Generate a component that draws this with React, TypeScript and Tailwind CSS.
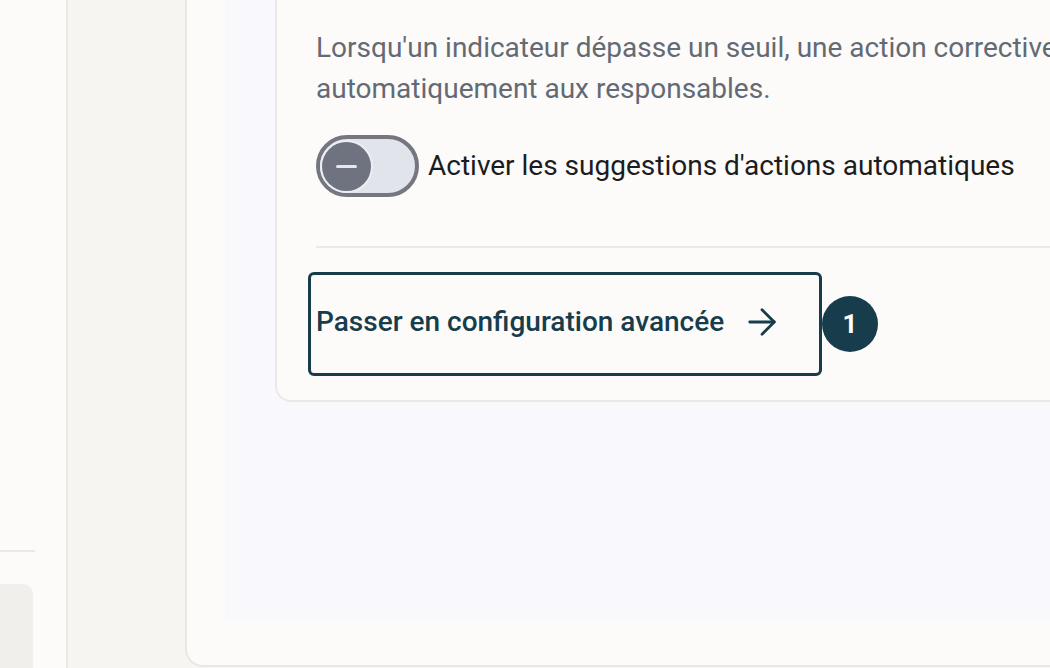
import { ArrowRight } from "lucide-react";

function Toggle() {
  return (
    <button
      type="button"
      role="switch"
      aria-checked="false"
      className="flex h-[62px] w-[103px] shrink-0 items-center rounded-full border-[4px] border-[#74777f] bg-[#e2e4ec] px-[2px]"
    >
      <span className="flex h-[49px] w-[49px] items-center justify-center rounded-full bg-[#6f7380] ring-2 ring-[#eceef4]">
        <span className="h-[3px] w-[21px] rounded-full bg-[#e6e7ec]" />
      </span>
    </button>
  );
}

export default function App() {
  return (
    <div
      className="flex h-[668px] w-[1050px] overflow-hidden bg-[#f6f5f2]"
      style={{ fontFamily: "Roboto, 'Noto Sans', sans-serif" }}
    >
      <aside className="flex w-[68px] shrink-0 flex-col justify-end border-r-2 border-[#ebe9e5] bg-[#fcfbf9]">
        <div className="h-[2px] w-[35px] bg-[#ebe9e5]" />
        <div className="mt-[32px] h-[84px] w-[33px] rounded-tr-[10px] bg-[#f1efec]" />
      </aside>

      <div className="w-[117px] shrink-0" />

      <main className="h-[667px] min-w-0 flex-1 rounded-bl-[18px] border-b-2 border-l-2 border-[#eae8e4] bg-[#fcfbf9] pb-[44px] pl-[38px]">
        <div className="h-full bg-[#f8f8fd] pl-[50px]">
          <section className="rounded-bl-[16px] border-b-2 border-l-2 border-[#ebe9e5] bg-[#fcfbf9] pb-[24px] pl-[39px] pt-[27px]">
            <p className="whitespace-nowrap text-[28px] leading-[41px] text-[#636a74]">
              Lorsqu'un indicateur dépasse un seuil, une action corrective
              <br />
              automatiquement aux responsables.
            </p>

            <div className="mt-[26px] flex items-center gap-[9px]">
              <Toggle />
              <span className="whitespace-nowrap text-[28px] text-[#1c1c1e]">
                Activer les suggestions d'actions automatiques
              </span>
            </div>

            <div className="mt-[49px] h-[2px] bg-[#ebe9e5]" />

            <div className="mt-[24px] flex items-center">
              <button
                type="button"
                className="-ml-[8px] flex h-[104px] w-[514px] items-center gap-[17px] rounded-[6px] border-[3px] border-[#173d4c] pb-[5px] pl-[5px] text-[28px] font-medium text-[#173d4c]"
              >
                Passer en configuration avancée
                <ArrowRight size={42} strokeWidth={1.6} />
              </button>
              <span className="flex h-[56px] w-[56px] items-center justify-center rounded-full bg-[#173d4c] text-[26px] font-bold text-white">
                1
              </span>
            </div>
          </section>
        </div>
      </main>
    </div>
  );
}
